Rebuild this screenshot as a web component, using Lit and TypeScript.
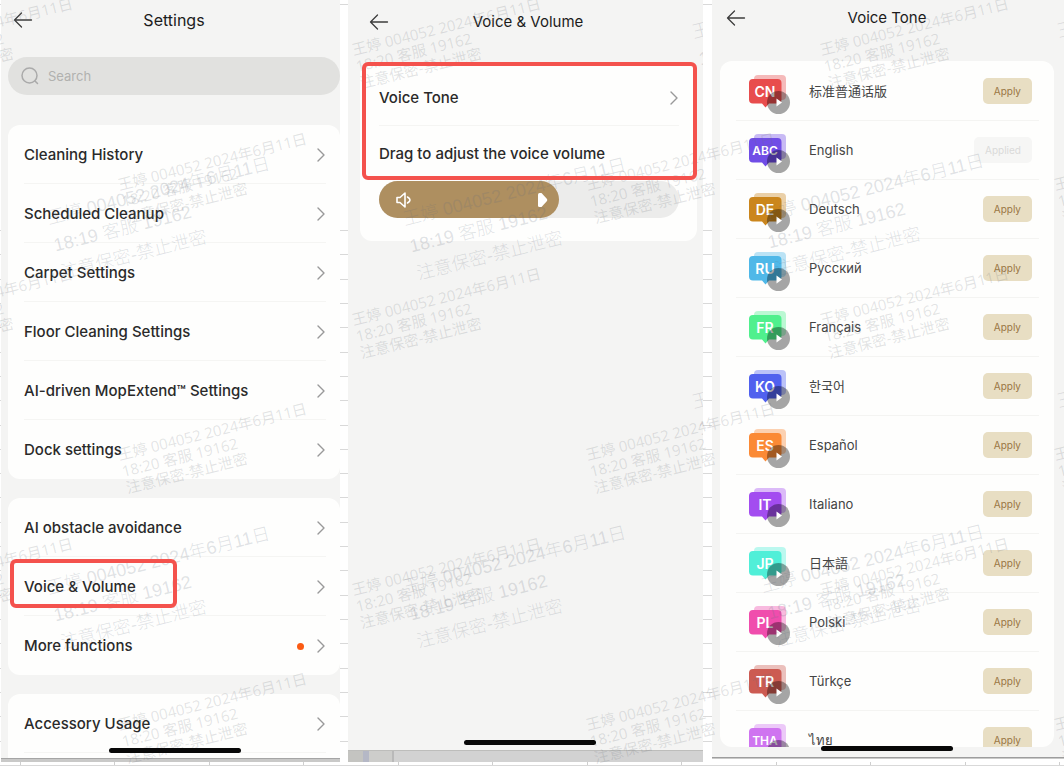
import { LitElement, html, svg, css } from "lit";
import { customElement, property, state } from "lit/decorators.js";
import { styleMap } from "lit/directives/style-map.js";

const backIcon = svg`<svg class="ico" width="20" height="18" viewBox="0 0 20 18" fill="none" stroke="#3c3c3c" stroke-width="1.3" stroke-linecap="round" stroke-linejoin="round"><path d="M8.5 2 1.5 9l7 7M1.5 9H18.5"/></svg>`;
const chevron = svg`<svg class="ico" width="10" height="14" viewBox="0 0 10 14" fill="none" stroke="#999" stroke-width="1.4" stroke-linecap="round" stroke-linejoin="round"><path d="M2 1l6 6-6 6"/></svg>`;

/** Repeated diagonal text laid over a surface. */
@customElement("water-mark")
class WaterMark extends LitElement {
  @property() time = "";
  @property({ attribute: false }) spots: number[][] = [];

  static styles = css`
    :host {
      position: absolute;
      inset: 0;
      overflow: hidden;
      pointer-events: none;
      font: 300 18px/28px "Liberation Sans", "Noto Sans CJK SC", sans-serif;
      color: rgba(100, 110, 125, 0.2);
    }
    :host([dense]) {
      font: 400 15px/17px "Open Sans", "Noto Sans CJK SC", sans-serif;
      color: rgba(105, 110, 120, 0.19);
    }
    .mark {
      position: absolute;
      margin: 0;
      white-space: nowrap;
      transform: rotate(-14deg);
      transform-origin: 0 0;
    }
  `;

  render() {
    return this.spots.map(
      ([x, y]) => html`<p class="mark" aria-hidden="true" style=${styleMap({ left: `${x}px`, top: `${y}px` })}>
        王婷 004052 2024年6月11日<br />${this.time} 客服 19162<br />注意保密-禁止泄密
      </p>`
    );
  }
}

interface Item {
  label: string;
  dot?: boolean;
  marked?: boolean;
}

const groups: Item[][] = [
  [
    { label: "Cleaning History" },
    { label: "Scheduled Cleanup" },
    { label: "Carpet Settings" },
    { label: "Floor Cleaning Settings" },
    { label: "AI-driven MopExtend™ Settings" },
    { label: "Dock settings" },
  ],
  [{ label: "AI obstacle avoidance" }, { label: "Voice & Volume", marked: true }, { label: "More functions", dot: true }],
  [{ label: "Accessory Usage" }],
];

const voices = [
  { code: "CN", name: "标准普通话版", color: "#e84d4d" },
  { code: "ABC", name: "English", color: "#704de6" },
  { code: "DE", name: "Deutsch", color: "#cb861c" },
  { code: "RU", name: "Русский", color: "#4fb8e8" },
  { code: "FR", name: "Français", color: "#50f08d" },
  { code: "KO", name: "한국어", color: "#5061ee" },
  { code: "ES", name: "Español", color: "#fb8a35" },
  { code: "IT", name: "Italiano", color: "#a34df0" },
  { code: "JP", name: "日本語", color: "#50efd8" },
  { code: "PL", name: "Polski", color: "#f04dad" },
  { code: "TR", name: "Türkçe", color: "#cc5b52" },
  { code: "THA", name: "ไทย", color: "#cf74f0" },
];

@customElement("app-root")
class AppRoot extends LitElement {
  @state() private applied = "ABC";
  @state() private volume = 60;

  static styles = css`
    :host {
      display: block;
      font-family: Inter, "Noto Sans CJK SC", "Noto Sans CJK KR", sans-serif;
      color: #2a2a2a;
    }
    * {
      box-sizing: border-box;
    }
    button {
      font: inherit;
      color: inherit;
      border: 0;
      padding: 0;
      background: none;
      cursor: pointer;
    }
    .ico {
      display: block;
      flex: none;
    }
    .page {
      position: relative;
      height: 100vh;
      overflow: hidden;
      background: #fff;
      display: grid;
      grid-template-columns: 339fr 355fr 353fr;
      column-gap: 8px;
      padding: 0 0 4px 1px;
    }
    .sheet {
      position: absolute;
      inset: 0;
      display: flex;
      flex-direction: column;
    }
    .line {
      flex: 1;
      border-bottom: 1px solid #d9d9d9;
    }
    .line.first {
      flex: 0 0 5px;
    }
    .line.merged {
      flex: 0 0 226px;
    }
    .ticks {
      position: absolute;
      inset: auto 0 0 0;
      height: 4px;
      display: flex;
      padding: 0 4px 0 20px;
      background: #fff;
      border-bottom: 1px solid #d9d9d9;
    }
    .tick {
      flex: 1;
      border-left: 1px solid #cfcfcf;
    }
    .tick:last-child {
      border-right: 1px solid #cfcfcf;
    }
    .panel {
      position: relative;
      min-width: 0;
      min-height: 0;
      display: flex;
      flex-direction: column;
      overflow: hidden;
      background: #f4f4f3;
    }
    .panel.tones {
      margin: 0 0 3px 1px;
    }
    .body {
      flex: 1;
      min-height: 0;
      overflow: hidden;
    }
    .strip {
      flex: none;
      height: 4px;
      border-top: 1px solid #a5a5a5;
      background: #c9c9c8;
    }
    .strip.tall {
      height: 12px;
      border-color: #bdbdbb;
      background: linear-gradient(90deg, #c4c4c1 15px, #b5b8c6 15px 21px, #cdcdcb 21px 44px, #b9b9b9 44px 46px, #d2d2d2 46px);
    }
    .strip.thin {
      height: 2px;
      border-color: #9d9d9d;
    }
    .bar {
      display: grid;
      grid-template-columns: 32px 1fr 32px;
      align-items: center;
      height: 40px;
      padding: 0 5px 0 12px;
    }
    .bar.mid {
      height: 44px;
      padding: 0 16px 0 21px;
    }
    .bar.low {
      height: 36px;
      padding: 0 16px 0 14px;
    }
    h2 {
      margin: 0;
      font-size: 16px;
      line-height: 20px;
      font-weight: 400;
      text-align: center;
      color: #1c1c1c;
    }
    .mid h2,
    .low h2 {
      font-size: 15px;
    }
    .search {
      display: flex;
      align-items: center;
      gap: 8px;
      height: 38px;
      margin: 17px 0 0 7px;
      padding: 0 12px;
      border-radius: 19px;
      background: #e1e1df;
    }
    .search input {
      flex: 1;
      min-width: 0;
      border: 0;
      padding: 0;
      outline: 0;
      background: none;
      font: 400 13px/18px Inter, sans-serif;
      color: #555;
    }
    .search input::placeholder {
      color: #b1b1af;
      opacity: 1;
    }
    .card {
      background: #fefefd;
      border-radius: 12px;
    }
    .group {
      margin: 0 0 19px 7px;
    }
    .search + .group {
      margin-top: 30px;
    }
    .item {
      position: relative;
      display: flex;
      width: 100%;
      padding: 0 14px 0 16px;
      text-align: left;
    }
    .inner {
      flex: 1;
      display: flex;
      align-items: center;
      gap: 12px;
      height: 59px;
      padding-top: 2px;
      border-bottom: 1px solid #f5f5f3;
      font-size: 15px;
      line-height: 20px;
      font-weight: 500;
    }
    .group .item:last-child .inner {
      border-color: transparent;
    }
    .group.tail .item:last-child .inner {
      border-color: #f5f5f3;
    }
    .group.tail {
      padding-bottom: 16px;
    }
    .text {
      flex: 1;
      white-space: nowrap;
    }
    .dot {
      width: 7px;
      height: 7px;
      border-radius: 50%;
      background: #fb5b13;
    }
    .box {
      position: absolute;
      z-index: 1;
      border: 4px solid #f4524d;
      border-radius: 6px;
      pointer-events: none;
    }
    .box.row {
      inset: 2px auto 8px 2px;
      width: 167px;
    }
    .box.wide {
      inset: 0 0 auto 2px;
      height: 118px;
    }
    .home {
      position: absolute;
      z-index: 1;
      bottom: 9px;
      left: 50%;
      width: 132px;
      height: 5px;
      margin-left: -62px;
      border-radius: 3px;
      background: #080808;
    }
    .mid-home {
      bottom: 17px;
    }
    .low-home {
      bottom: 8px;
      margin-left: -67px;
    }
    .volume {
      position: relative;
      margin: 18px 6px 0 12px;
      padding: 6px 18px 23px 19px;
    }
    .volume .inner {
      height: 58px;
    }
    .volume .item {
      padding: 0;
    }
    .caption {
      display: block;
      padding: 18px 0 17px;
      font-size: 15px;
      line-height: 20px;
      font-weight: 500;
    }
    .slider {
      position: relative;
      height: 37px;
      border-radius: 19px;
      background: #ececeb;
    }
    .fill {
      display: flex;
      align-items: center;
      justify-content: space-between;
      height: 37px;
      padding: 0 10px 0 16px;
      border-radius: 19px;
      background: #ae8f60;
    }
    .slider input {
      position: absolute;
      inset: 0;
      width: 100%;
      height: 100%;
      margin: 0;
      opacity: 0;
    }
    .list {
      height: calc(100% - 71px);
      margin: 25px 10px 0 8px;
      overflow: hidden;
    }
    .voices {
      margin: 0;
      padding: 1px 15px 0 16px;
      list-style: none;
    }
    .voice {
      display: flex;
      align-items: center;
      height: 59px;
      padding: 0 7px 0 13px;
      border-bottom: 1px solid #f4f4f2;
      font-size: 13px;
      line-height: 18px;
      color: #444;
    }
    .voice .ico {
      overflow: visible;
    }
    .name {
      flex: 1;
      padding-left: 18px;
    }
    .badge {
      font: 600 14px Inter, sans-serif;
      text-anchor: middle;
      fill: #fff;
    }
    .badge.long {
      font-size: 12px;
    }
    .apply {
      height: 26px;
      padding: 0 11px;
      border-radius: 5px;
      background: #e8dec3;
      color: #9a7644;
      font-size: 10px;
      line-height: 14px;
    }
    .apply:disabled {
      background: #f6f6f5;
      color: #dadad9;
    }
  `;

  private item(i: Item) {
    return html`<button class="item" type="button">
      <span class="inner"
        ><span class="text">${i.label}</span>${i.dot ? html`<span class="dot"></span>` : ""}${chevron}</span
      >
      ${i.marked ? html`<span class="box row"></span>` : ""}
    </button>`;
  }

  private voice(v: (typeof voices)[number]) {
    const on = v.code === this.applied;
    return html`<li class="voice">
      <svg class="ico" width="42" height="38" viewBox="0 0 42 38" aria-hidden="true">
        <rect x="5" y="3" width="32" height="25" rx="4" fill=${v.color} opacity=".38" />
        <path d="M4 7H28.500a4 4 0 0 1 4 4V27.500a4 4 0 0 1-4 4H20L16.500 35.500 13 31.500H4a4 4 0 0 1-4-4V11a4 4 0 0 1 4-4Z" fill=${v.color} />
        <text class="badge ${v.code.length > 2 ? "long" : ""}" x="16" y=${v.code.length > 2 ? 24 : 25}>${v.code}</text>
        <circle cx="29.500" cy="30.500" r="11.500" fill="#000" opacity=".35" />
        <path d="M27.500 26.500v8l5.500-4z" fill="#fff" />
      </svg>
      <span class="name">${v.name}</span>
      <button class="apply" type="button" ?disabled=${on} @click=${() => (this.applied = v.code)}>
        ${on ? "Applied" : "Apply"}
      </button>
    </li>`;
  }

  render() {
    return html`<main class="page">
      <div class="sheet" aria-hidden="true">
        <div class="line first"></div>
        <div class="line merged"></div>
        ${Array.from({ length: 22 }, () => html`<div class="line"></div>`)}
      </div>
      <div class="ticks" aria-hidden="true">${Array.from({ length: 11 }, () => html`<div class="tick"></div>`)}</div>

      <section class="panel">
        <div class="body">
          <header class="bar">
            <button type="button" aria-label="Back">${backIcon}</button>
            <h2>Settings</h2>
          </header>
          <label class="search">
            <svg class="ico" width="20" height="20" viewBox="0 0 20 20" fill="none" stroke="#aaa" stroke-width="1.500" stroke-linecap="round">
              <circle cx="9.500" cy="9.500" r="7.500" />
              <path d="M15 15 17.500 17.500" />
            </svg>
            <input type="search" placeholder="Search" aria-label="Search" />
          </label>
          ${groups.map(
            (g) => html`<nav class="card group ${g.length === 1 ? "tail" : ""}">${g.map((i) => this.item(i))}</nav>`
          )}
        </div>
        <div class="strip"></div>
        <water-mark time="18:19" .spots=${[[43, 205], [43, 575]]}></water-mark>
        <div class="home"></div>
      </section>

      <section class="panel">
        <div class="body">
          <header class="bar mid">
            <button type="button" aria-label="Back">${backIcon}</button>
            <h2>Voice &amp; Volume</h2>
          </header>
          <div class="card volume">
            ${this.item({ label: "Voice Tone" })}
            <label class="caption" for="vol">Drag to adjust the voice volume</label>
            <div class="slider">
              <div class="fill" style=${styleMap({ width: `${this.volume}%` })}>
                <svg class="ico" width="18" height="18" viewBox="0 0 18 18" fill="none" stroke="#fff" stroke-width="1.600" stroke-linejoin="round" stroke-linecap="round">
                  <path d="M2 6.500H5L10 2V16L5 11.500H2ZM12.500 6Q15 7.500 15 9T12.500 12" />
                </svg>
                <svg class="ico" width="12" height="16" viewBox="0 0 12 16">
                  <path d="M1 2.500Q1 1 2.500 1H4.500L10 7Q10.500 8 10 9L4.500 15H2.500Q1 15 1 13.500Z" fill="#fff" />
                </svg>
              </div>
              <input
                id="vol"
                type="range"
                min="20"
                max="100"
                .value=${String(this.volume)}
                @input=${(e: Event) => (this.volume = Number((e.target as HTMLInputElement).value))}
              />
            </div>
            <span class="box wide"></span>
          </div>
        </div>
        <div class="strip tall"></div>
        <water-mark time="18:19" .spots=${[[52, 206], [52, 574], [341, 19], [341, 389]]}></water-mark>
        <div class="home mid-home"></div>
      </section>

      <section class="panel tones">
        <div class="body">
          <header class="bar low">
            <button type="button" aria-label="Back">${backIcon}</button>
            <h2>Voice Tone</h2>
          </header>
          <div class="card list">
            <ul class="voices">
              ${voices.map((v) => this.voice(v))}
            </ul>
          </div>
        </div>
        <div class="strip thin"></div>
        <water-mark time="18:19" .spots=${[[46, 202], [46, 573], [342, 18], [342, 388]]}></water-mark>
        <div class="home low-home"></div>
      </section>

      <water-mark
        dense
        time="18:20"
        .spots=${Array.from({ length: 6 }, (_, c) => [0, 1, 2].map((r) => [c * 234 - 118, 42 + r * 270 + (c % 2) * 135])).flat()}
      ></water-mark>
    </main>`;
  }
}
